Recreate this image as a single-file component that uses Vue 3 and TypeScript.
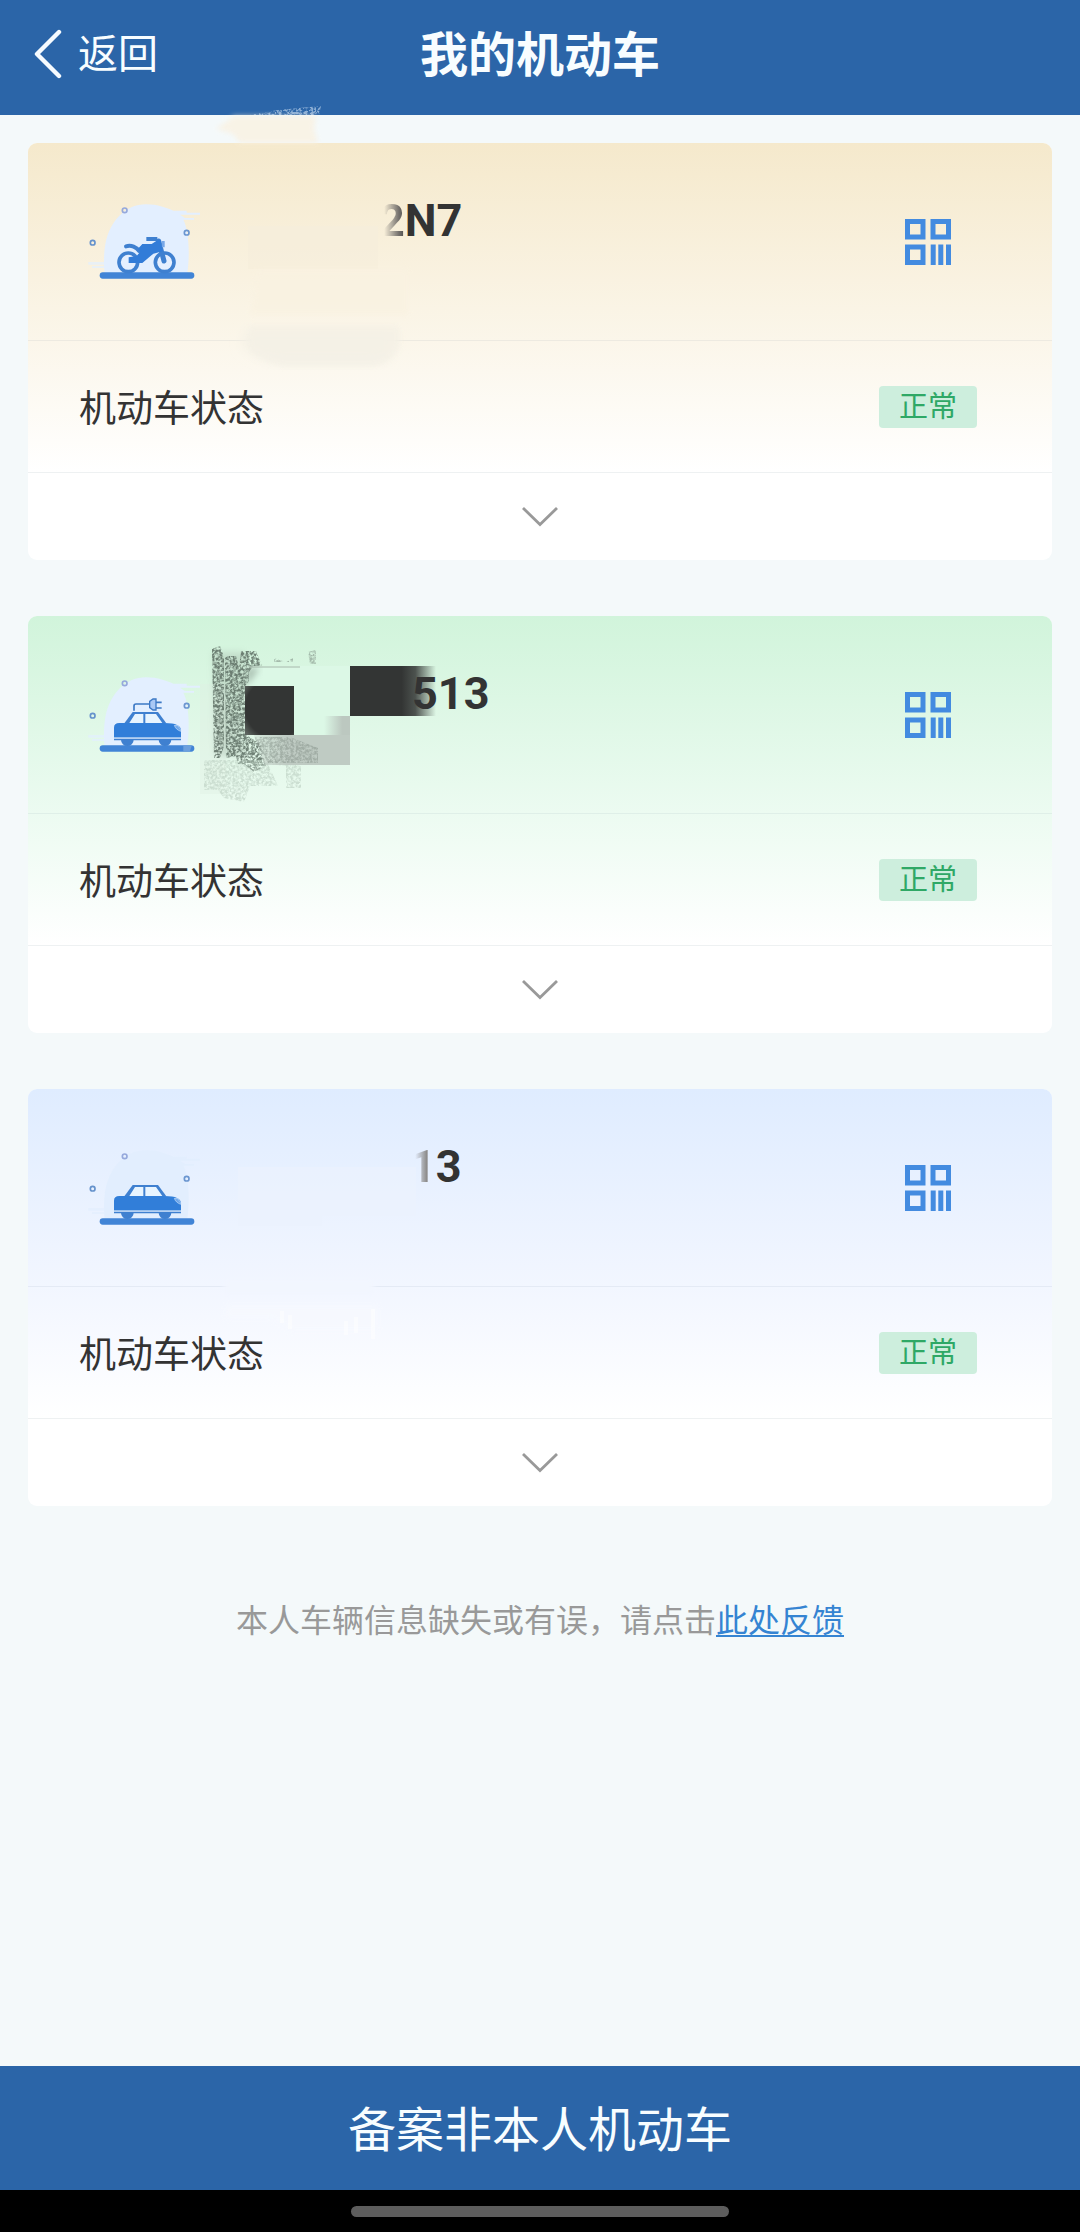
<script setup lang="ts">
type Kind = 'moto' | 'ev' | 'car'

interface Vehicle {
  kind: Kind
  faded: string
  plate: string
  offset: number
}

const vehicles: Vehicle[] = [
  { kind: 'moto', faded: '2', plate: 'N7', offset: 159 },
  { kind: 'ev', faded: '', plate: '513', offset: 192 },
  { kind: 'car', faded: '1', plate: '3', offset: 190 },
]
</script>

<template>
  <div class="page">
    <header class="bar">
      <div class="back">
        <svg class="back-icon" width="30" height="50" viewBox="0 0 30 50">
          <path d="M26 3 4 25 26 47" fill="none" stroke="#f6fbff" stroke-width="4.4" stroke-linecap="round" stroke-linejoin="round" />
        </svg>
        <span>返回</span>
      </div>
      <h1>我的机动车</h1>
    </header>

    <main class="list">
      <section v-for="v in vehicles" :key="v.kind" class="card" :class="v.kind">
        <div class="tint">
          <div class="head">
            <svg class="vehicle" width="150" height="120" viewBox="0 0 450 360">
              <g class="halo">
                <path d="M104 278C100 255 102 215 106 193C120 120 168 73 228 73C264 73 290 84 310 92H350V98H390V104H330L345 114H372V119H340C357 150 360 225 352 278Z" />
                <path d="M55 246H110V254H55ZM66 258H110V264H66Z" opacity=".7" />
              </g>
              <g fill="none" stroke-width="5">
                <circle cx="164" cy="91" r="7" stroke="#96a9dc" />
                <circle cx="350" cy="158" r="7" stroke="#6b96d0" />
                <circle cx="68" cy="188" r="7" stroke="#6592cc" />
              </g>
              <rect x="89" y="277" width="284" height="19" rx="9.5" fill="#4184d6" />
              <template v-if="v.kind === 'moto'">
                <g fill="none" stroke="#3f80d0" stroke-width="11">
                  <circle cx="175" cy="247" r="28" fill="#e5efff" />
                  <circle cx="284" cy="247" r="28" fill="#e5efff" />
                  <path d="M168 199C184 194 200 202 207 213" stroke-width="12" stroke-linecap="round" />
                  <path d="M229 177H262" stroke-width="12" />
                  <path d="M266 183 282 243" stroke-width="15" stroke-linecap="round" />
                </g>
                <path d="M204 206 217 192H245L262 181H272L278 214 250 221 217 249H176V232L200 228 210 216Z" fill="#327cd8" />
                <path d="M275 183H284V202H276Z" fill="#78a8e8" />
              </template>
              <template v-else>
                <template v-if="v.kind === 'ev'">
                  <path d="M192 180V166Q192 160 198 160H239M258 155H275M258 172H275" transform="translate(0 -7)" fill="none" stroke="#3d79c5" stroke-width="5" />
                  <path d="M258 138V171H249L239 164V145L249 138Z" fill="#a9c8f5" stroke="#3d79c5" stroke-width="4" />
                </template>
                <path d="M163 211 188 177H264L289 211Z" fill="#3f80d0" />
                <path d="M178 210 195 183H220V210ZM226 210V183H258L277 210Z" fill="#e7f4ff" />
                <path d="M132 254V224Q132 210 148 210H285Q333 210 333 233V254Z" fill="#317ed9" />
                <path d="M132 259H333" stroke="#3f80d0" stroke-width="5" />
                <path d="M132 255H333" stroke="#d8e8fb" stroke-width="3" />
                <path d="M153 260H191A19 19 0 0 1 153 260ZM266 260H304A19 19 0 0 1 266 260Z" fill="#3f80d0" />
                <path d="M313 217C316 226 322 231 332 235V230L324 218Z" fill="#6fa7ea" stroke="#c5def9" stroke-width="2" />
                <path v-if="v.kind === 'ev'" d="M340 279H365L360 295H340Z" fill="#82ade1" opacity=".65" />
              </template>
            </svg>
            <div class="plate" :style="{ marginLeft: v.offset + 'px' }">
              <span class="faded">{{ v.faded }}</span><span>{{ v.plate }}</span>
            </div>
            <svg class="qr" width="46" height="46" viewBox="0 0 46 46">
              <g fill="none" stroke="#438be0" stroke-width="5">
                <rect x="2.5" y="2.5" width="15.5" height="15.5" />
                <rect x="28" y="2.5" width="15.5" height="15.5" />
                <rect x="2.5" y="28" width="15.5" height="15.5" />
                <path d="M28.2 25.5V46M35.8 25.5V46M43.5 25.5V46" />
              </g>
            </svg>
          </div>
          <div class="status">
            <span>机动车状态</span>
            <span class="badge">正常</span>
          </div>
        </div>
        <div class="more">
          <svg width="40" height="24" viewBox="0 0 40 24">
            <path d="M3 3 20 19.5 37 3" fill="none" stroke="#999" stroke-width="2.8" />
          </svg>
        </div>

        <!-- retouching marks that hide part of the plate -->
        <svg v-if="v.kind === 'moto'" class="smudge" width="1024" height="417" viewBox="0 0 1024 417">
          <defs>
            <filter id="soft" x="-20%" y="-20%" width="140%" height="140%"><feGaussianBlur stdDeviation="6" /></filter>
            <filter id="edge" x="-20%" y="-20%" width="140%" height="140%"><feGaussianBlur stdDeviation="2.5" /></filter>
            <filter id="chalk" x="0" y="0" width="100%" height="100%">
              <feTurbulence type="fractalNoise" baseFrequency=".35" numOctaves="2" seed="4" />
              <feColorMatrix values="0 0 0 0 0  0 0 0 0 0  0 0 0 0 0  6 0 0 0 -2.6" result="m" />
              <feComposite in="SourceGraphic" in2="m" operator="in" />
              <feGaussianBlur stdDeviation=".5" />
            </filter>
            <linearGradient id="grey" x2="0" y2="1"><stop stop-color="#f5f1e5" /><stop offset="1" stop-color="#f4f1e7" /></linearGradient>
          </defs>
          <path d="M206-27H288L286-14 290 0H212L205-9 188-14Z" fill="#f9f2e3" opacity=".85" filter="url(#edge)" />
          <path d="M222-28 250-33 293-37 291-28Z" fill="#dcebfa" opacity=".55" filter="url(#chalk)" />
          <path d="M220 83H350V126H220Z" fill="#f6eddb" opacity=".75" />
          <path d="M230 126H380V172H222Z" fill="#f9f2e1" opacity=".7" filter="url(#edge)" />
          <path d="M218 186H368V205Q362 219 345 220H250Q224 214 214 202Z" fill="#f4f1e6" filter="url(#soft)" />
          <path d="M222 184H371V204Q364 218 348 223H254Q230 216 221 205Z" fill="url(#grey)" opacity=".75" filter="url(#edge)" />
        </svg>
        <svg v-else-if="v.kind === 'ev'" class="smudge" width="1024" height="417" viewBox="0 0 1024 417">
          <defs>
            <filter id="coal" x="0" y="0" width="100%" height="100%">
              <feTurbulence type="fractalNoise" baseFrequency=".38" numOctaves="3" seed="8" result="n" />
              <feColorMatrix in="n" values="0 0 0 0 0  0 0 0 0 0  0 0 0 0 0  3 0 0 0 -.95" result="m" />
              <feComposite in="SourceGraphic" in2="m" operator="in" result="g" />
              <feGaussianBlur in="g" stdDeviation=".7" />
            </filter>
            <filter id="haze" x="-20%" y="-20%" width="140%" height="140%"><feGaussianBlur stdDeviation="3" /></filter>
            <linearGradient id="fadeR"><stop offset=".6" stop-color="#333534" /><stop offset=".76" stop-color="#333534" stop-opacity=".85" /><stop offset="1" stop-color="#333534" stop-opacity="0" /></linearGradient>
            <linearGradient id="greyR"><stop offset="0" stop-color="#bcc8c0" stop-opacity="0" /><stop offset=".7" stop-color="#bcc8c0" /></linearGradient>
            <radialGradient id="dark" cx=".62" cy=".45" r=".78"><stop offset=".78" stop-color="#333534" /><stop offset="1" stop-color="#5d645f" /></radialGradient>
            <linearGradient id="greyL"><stop offset="0" stop-color="#bcc8c0" stop-opacity=".3" /><stop offset=".35" stop-color="#bfcbc3" /></linearGradient>
          </defs>
          <path d="M172 68H198V178H172Z" fill="#dfeee3" opacity=".35" />
          <path d="M185 36H217V140H187Z" fill="#9db0a3" opacity=".35" filter="url(#haze)" />
          <path d="M184 33 192 30 196 40V130L192 142H186ZM197 42 200 40H208L211 52 213 35H228L234 50 222 56V64L217 70V118L232 128 238 150 226 156 216 148H210L208 140 198 142Z" fill="#5d6e63" opacity=".85" filter="url(#coal)" />
          <path d="M176 144H240L273 150V172H258V150L240 148 250 170H222L216 186 196 182 190 174H176Z" fill="#b2c6b8" opacity=".5" filter="url(#coal)" />
          <path d="M225 50H322V119H221V56Z" fill="#dcf8e6" />
          <path d="M246 42 258 46 265 42V46H246ZM280 36 288 34V48H282Z" fill="#8fa295" opacity=".7" filter="url(#coal)" />
          <path d="M221 51H272" stroke="#b0c4b5" stroke-width="2" opacity=".6" />
          <path d="M218 52H232L222 66 218 70Z" fill="#8fa295" opacity=".6" filter="url(#haze)" />
          <rect x="296" y="100" width="26" height="20" fill="url(#greyR)" />
          <path d="M226 119H322V149H236Z" fill="url(#greyL)" />
          <path d="M226 121H262L290 132V147H240Z" fill="#7d8a81" opacity=".45" filter="url(#coal)" />
          <rect x="217" y="70" width="49" height="49" fill="url(#dark)" />
          <rect x="322" y="50" width="86" height="50" fill="url(#fadeR)" />
        </svg>
        <svg v-else class="smudge" width="1024" height="417" viewBox="0 0 1024 417">
          <defs>
            <filter id="mist" x="-20%" y="-20%" width="140%" height="140%"><feGaussianBlur stdDeviation="2.5" /></filter>
          </defs>
          <path d="M210 78H388V127H294V137H210Z" fill="#ebf1fd" opacity=".75" />
          <path d="M196 190H346V206H196Z" fill="#f2f6fe" filter="url(#mist)" />
          <path d="M198 216H350V242H262L244 230H198Z" fill="#f7f9fe" opacity=".7" filter="url(#mist)" />
          <path d="M254 222V234M262 226V240M318 232V246M328 228V244M345 220V250" stroke="#fff" stroke-width="4" opacity=".5" />
        </svg>
      </section>

      <p class="hint">本人车辆信息缺失或有误，请点击<a>此处反馈</a></p>
    </main>

    <button class="submit">备案非本人机动车</button>
    <div class="nav"><i></i></div>
  </div>
</template>

<style>
body {
  margin: 0;
  background: #f4f9fa;
}
</style>

<style scoped>
.page {
  width: 1080px;
  height: 2232px;
  display: flex;
  flex-direction: column;
  background: #f4f9fa;
  font-family: Roboto, "Noto Sans CJK SC", sans-serif;
  color: #333;
}
.bar {
  height: 115px;
  flex: none;
  display: grid;
  grid-template-columns: 1fr auto 1fr;
  align-items: center;
  background: #2b65a8;
  color: #f8fdff;
}
.bar > * {
  height: 108px;
  align-self: start;
}
.back {
  display: flex;
  align-items: center;
  padding-left: 33px;
  font-size: 40px;
  line-height: 108px;
}
.back span {
  margin-left: 15px;
  padding-top: 2px;
}
h1 {
  margin: 0;
  font-size: 48px;
  line-height: 112px;
  font-weight: 700;
}
.list {
  flex: 1;
  display: flex;
  flex-direction: column;
  gap: 56px;
  padding: 28px 28px 0;
}
.card {
  position: relative;
  height: 417px;
  flex: none;
  display: flex;
  flex-direction: column;
  border-radius: 9px;
  background: #fff;
}
.tint {
  height: 329px;
  border-radius: 9px 9px 0 0;
  border-bottom: 1px solid #eef1f2;
}
.moto .tint { background: linear-gradient(#f5e9cc, #fbf6ea 60%, #fff); }
.ev .tint { background: linear-gradient(#d1f4db, #ecfbf1 60%, #fff); }
.car .tint { background: linear-gradient(#dfecff, #f2f6ff 60%, #fff); }
.head {
  box-sizing: border-box;
  height: 198px;
  display: flex;
  align-items: flex-start;
  padding: 0 101px 0 42px;
  border-bottom: 1px solid rgba(60, 80, 110, 0.07);
}
.vehicle {
  margin-top: 37px;
}
.halo { fill: #e3efff; }
.car .halo { fill: #e2eefe; }
.plate {
  position: relative;
  z-index: 1;
  margin-top: 51px;
  font-size: 45px;
  line-height: 53px;
  font-weight: 700;
}
.faded {
  background: linear-gradient(90deg, transparent 20%, #77736f 75%, #4b4a49);
  background-clip: text;
  -webkit-background-clip: text;
  color: transparent;
}
.qr {
  margin: 76px 0 0 auto;
}
.status {
  height: 129px;
  display: flex;
  align-items: center;
  justify-content: space-between;
  padding: 0 75px 0 51px;
  font-size: 37px;
}
.badge {
  width: 98px;
  height: 42px;
  margin-top: 2px;
  border-radius: 4px;
  background: #cdeedd;
  color: #2fa866;
  font-size: 29px;
  line-height: 43px;
  text-align: center;
}
.more {
  flex: 1;
  display: flex;
  align-items: center;
  justify-content: center;
}
.smudge {
  position: absolute;
  left: 0;
  top: 0;
  overflow: visible;
  pointer-events: none;
}
.hint {
  margin: 38px 0 0;
  text-align: center;
  font-size: 32px;
  line-height: 42px;
  color: #999;
}
.hint a {
  color: #3584d2;
  text-decoration: underline;
  text-decoration-thickness: 2px;
  text-underline-offset: 3px;
}
.submit {
  flex: none;
  box-sizing: border-box;
  height: 124px;
  border: 0;
  padding: 5px 0 0;
  background: #2b65a8;
  color: #f8fdff;
  font: 400 48px/119px Roboto, "Noto Sans CJK SC", sans-serif;
}
.nav {
  flex: none;
  box-sizing: border-box;
  height: 42px;
  padding-top: 16px;
  background: #000;
}
.nav i {
  display: block;
  width: 378px;
  height: 11px;
  margin: 0 auto;
  border-radius: 6px;
  background: #5d5d5d;
}
</style>
